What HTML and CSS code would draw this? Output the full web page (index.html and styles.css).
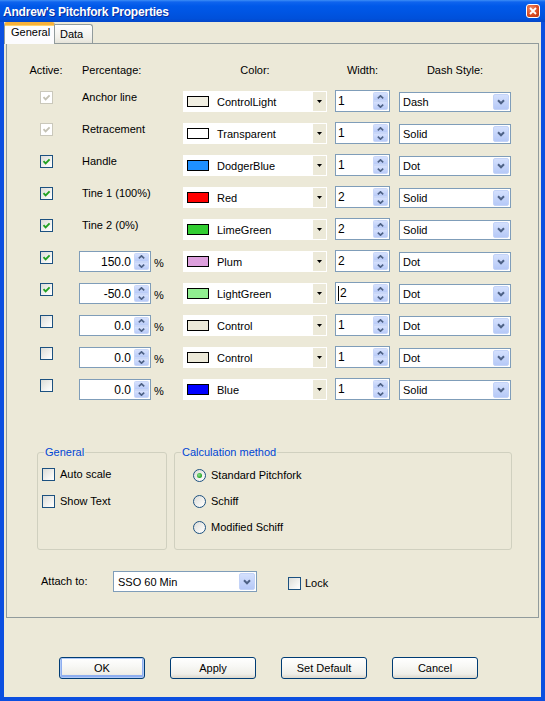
FILE: index.html
```html
<!DOCTYPE html>
<html>
<head>
<meta charset="utf-8">
<title>Andrew's Pitchfork Properties</title>
<link rel="stylesheet" href="styles.css">
</head>
<body>
<div class="window">
  <div class="titlebar">
    <span class="title">Andrew's Pitchfork Properties</span>
    <span class="close"><svg width="8" height="8" viewBox="0 0 8 8"><path d="M1 1L7 7M7 1L1 7" stroke="#fff" stroke-width="1.8" fill="none"/></svg></span>
  </div>
  <div class="frame">
    <div class="tabs">
      <div class="tab active">General</div>
      <div class="tab">Data</div>
    </div>
    <div class="panel">
      <div class="grid">
        <div class="h h-active">Active:</div>
        <div class="h h-pct">Percentage:</div>
        <div class="h h-color">Color:</div>
        <div class="h h-width">Width:</div>
        <div class="h h-dash">Dash Style:</div>

        <!-- row 1 -->
        <span class="cb dis"><svg width="9" height="9" viewBox="0 0 9 9"><path d="M1.5 4.2L3.6 6.3L7.6 2.3" stroke="#c4c2b4" stroke-width="1.9" fill="none"/></svg></span>
        <div class="lbl">Anchor line</div>
        <div class="ccombo"><span class="swatch sw-controllight"></span><span class="cc-text">ControlLight</span><span class="cc-btn"><svg width="5" height="3" viewBox="0 0 5 3"><path d="M0 0H5L2.5 3Z" fill="#000"/></svg></span></div>
        <div class="spin spin-w"><span class="spin-val">1</span><span class="spinbtn"><span class="sb"><svg width="7" height="4" viewBox="0 0 7 4"><path d="M0.8 3.4L3.5 0.8L6.2 3.4" stroke="#4d6185" stroke-width="1.6" fill="none"/></svg></span><span class="sb"><svg width="7" height="4" viewBox="0 0 7 4"><path d="M0.8 0.6L3.5 3.2L6.2 0.6" stroke="#4d6185" stroke-width="1.6" fill="none"/></svg></span></span></div>
        <div class="combo combo-dash"><span class="combo-text">Dash</span><span class="combo-btn"><svg width="8" height="6" viewBox="0 0 8 6"><path d="M1 1.3L4 4.3L7 1.3" stroke="#4d6185" stroke-width="2" fill="none"/></svg></span></div>

        <!-- row 2 -->
        <span class="cb dis"><svg width="9" height="9" viewBox="0 0 9 9"><path d="M1.5 4.2L3.6 6.3L7.6 2.3" stroke="#c4c2b4" stroke-width="1.9" fill="none"/></svg></span>
        <div class="lbl">Retracement</div>
        <div class="ccombo"><span class="swatch sw-transparent"></span><span class="cc-text">Transparent</span><span class="cc-btn"><svg width="5" height="3" viewBox="0 0 5 3"><path d="M0 0H5L2.5 3Z" fill="#000"/></svg></span></div>
        <div class="spin spin-w"><span class="spin-val">1</span><span class="spinbtn"><span class="sb"><svg width="7" height="4" viewBox="0 0 7 4"><path d="M0.8 3.4L3.5 0.8L6.2 3.4" stroke="#4d6185" stroke-width="1.6" fill="none"/></svg></span><span class="sb"><svg width="7" height="4" viewBox="0 0 7 4"><path d="M0.8 0.6L3.5 3.2L6.2 0.6" stroke="#4d6185" stroke-width="1.6" fill="none"/></svg></span></span></div>
        <div class="combo combo-dash"><span class="combo-text">Solid</span><span class="combo-btn"><svg width="8" height="6" viewBox="0 0 8 6"><path d="M1 1.3L4 4.3L7 1.3" stroke="#4d6185" stroke-width="2" fill="none"/></svg></span></div>

        <!-- row 3 -->
        <span class="cb"><svg width="9" height="9" viewBox="0 0 9 9"><path d="M1.5 4.2L3.6 6.3L7.6 2.3" stroke="#21a121" stroke-width="1.9" fill="none"/></svg></span>
        <div class="lbl">Handle</div>
        <div class="ccombo"><span class="swatch sw-dodgerblue"></span><span class="cc-text">DodgerBlue</span><span class="cc-btn"><svg width="5" height="3" viewBox="0 0 5 3"><path d="M0 0H5L2.5 3Z" fill="#000"/></svg></span></div>
        <div class="spin spin-w"><span class="spin-val">1</span><span class="spinbtn"><span class="sb"><svg width="7" height="4" viewBox="0 0 7 4"><path d="M0.8 3.4L3.5 0.8L6.2 3.4" stroke="#4d6185" stroke-width="1.6" fill="none"/></svg></span><span class="sb"><svg width="7" height="4" viewBox="0 0 7 4"><path d="M0.8 0.6L3.5 3.2L6.2 0.6" stroke="#4d6185" stroke-width="1.6" fill="none"/></svg></span></span></div>
        <div class="combo combo-dash"><span class="combo-text">Dot</span><span class="combo-btn"><svg width="8" height="6" viewBox="0 0 8 6"><path d="M1 1.3L4 4.3L7 1.3" stroke="#4d6185" stroke-width="2" fill="none"/></svg></span></div>

        <!-- row 4 -->
        <span class="cb"><svg width="9" height="9" viewBox="0 0 9 9"><path d="M1.5 4.2L3.6 6.3L7.6 2.3" stroke="#21a121" stroke-width="1.9" fill="none"/></svg></span>
        <div class="lbl">Tine 1 (100%)</div>
        <div class="ccombo"><span class="swatch sw-red"></span><span class="cc-text">Red</span><span class="cc-btn"><svg width="5" height="3" viewBox="0 0 5 3"><path d="M0 0H5L2.5 3Z" fill="#000"/></svg></span></div>
        <div class="spin spin-w"><span class="spin-val">2</span><span class="spinbtn"><span class="sb"><svg width="7" height="4" viewBox="0 0 7 4"><path d="M0.8 3.4L3.5 0.8L6.2 3.4" stroke="#4d6185" stroke-width="1.6" fill="none"/></svg></span><span class="sb"><svg width="7" height="4" viewBox="0 0 7 4"><path d="M0.8 0.6L3.5 3.2L6.2 0.6" stroke="#4d6185" stroke-width="1.6" fill="none"/></svg></span></span></div>
        <div class="combo combo-dash"><span class="combo-text">Solid</span><span class="combo-btn"><svg width="8" height="6" viewBox="0 0 8 6"><path d="M1 1.3L4 4.3L7 1.3" stroke="#4d6185" stroke-width="2" fill="none"/></svg></span></div>

        <!-- row 5 -->
        <span class="cb"><svg width="9" height="9" viewBox="0 0 9 9"><path d="M1.5 4.2L3.6 6.3L7.6 2.3" stroke="#21a121" stroke-width="1.9" fill="none"/></svg></span>
        <div class="lbl">Tine 2 (0%)</div>
        <div class="ccombo"><span class="swatch sw-limegreen"></span><span class="cc-text">LimeGreen</span><span class="cc-btn"><svg width="5" height="3" viewBox="0 0 5 3"><path d="M0 0H5L2.5 3Z" fill="#000"/></svg></span></div>
        <div class="spin spin-w"><span class="spin-val">2</span><span class="spinbtn"><span class="sb"><svg width="7" height="4" viewBox="0 0 7 4"><path d="M0.8 3.4L3.5 0.8L6.2 3.4" stroke="#4d6185" stroke-width="1.6" fill="none"/></svg></span><span class="sb"><svg width="7" height="4" viewBox="0 0 7 4"><path d="M0.8 0.6L3.5 3.2L6.2 0.6" stroke="#4d6185" stroke-width="1.6" fill="none"/></svg></span></span></div>
        <div class="combo combo-dash"><span class="combo-text">Solid</span><span class="combo-btn"><svg width="8" height="6" viewBox="0 0 8 6"><path d="M1 1.3L4 4.3L7 1.3" stroke="#4d6185" stroke-width="2" fill="none"/></svg></span></div>

        <!-- row 6 -->
        <span class="cb"><svg width="9" height="9" viewBox="0 0 9 9"><path d="M1.5 4.2L3.6 6.3L7.6 2.3" stroke="#21a121" stroke-width="1.9" fill="none"/></svg></span>
        <div class="pct"><div class="spin spin-p"><span class="spin-val">150.0</span><span class="spinbtn"><span class="sb"><svg width="7" height="4" viewBox="0 0 7 4"><path d="M0.8 3.4L3.5 0.8L6.2 3.4" stroke="#4d6185" stroke-width="1.6" fill="none"/></svg></span><span class="sb"><svg width="7" height="4" viewBox="0 0 7 4"><path d="M0.8 0.6L3.5 3.2L6.2 0.6" stroke="#4d6185" stroke-width="1.6" fill="none"/></svg></span></span></div><span class="pctsign">%</span></div>
        <div class="ccombo"><span class="swatch sw-plum"></span><span class="cc-text">Plum</span><span class="cc-btn"><svg width="5" height="3" viewBox="0 0 5 3"><path d="M0 0H5L2.5 3Z" fill="#000"/></svg></span></div>
        <div class="spin spin-w"><span class="spin-val">2</span><span class="spinbtn"><span class="sb"><svg width="7" height="4" viewBox="0 0 7 4"><path d="M0.8 3.4L3.5 0.8L6.2 3.4" stroke="#4d6185" stroke-width="1.6" fill="none"/></svg></span><span class="sb"><svg width="7" height="4" viewBox="0 0 7 4"><path d="M0.8 0.6L3.5 3.2L6.2 0.6" stroke="#4d6185" stroke-width="1.6" fill="none"/></svg></span></span></div>
        <div class="combo combo-dash"><span class="combo-text">Dot</span><span class="combo-btn"><svg width="8" height="6" viewBox="0 0 8 6"><path d="M1 1.3L4 4.3L7 1.3" stroke="#4d6185" stroke-width="2" fill="none"/></svg></span></div>

        <!-- row 7 -->
        <span class="cb"><svg width="9" height="9" viewBox="0 0 9 9"><path d="M1.5 4.2L3.6 6.3L7.6 2.3" stroke="#21a121" stroke-width="1.9" fill="none"/></svg></span>
        <div class="pct"><div class="spin spin-p"><span class="spin-val">-50.0</span><span class="spinbtn"><span class="sb"><svg width="7" height="4" viewBox="0 0 7 4"><path d="M0.8 3.4L3.5 0.8L6.2 3.4" stroke="#4d6185" stroke-width="1.6" fill="none"/></svg></span><span class="sb"><svg width="7" height="4" viewBox="0 0 7 4"><path d="M0.8 0.6L3.5 3.2L6.2 0.6" stroke="#4d6185" stroke-width="1.6" fill="none"/></svg></span></span></div><span class="pctsign">%</span></div>
        <div class="ccombo"><span class="swatch sw-lightgreen"></span><span class="cc-text">LightGreen</span><span class="cc-btn"><svg width="5" height="3" viewBox="0 0 5 3"><path d="M0 0H5L2.5 3Z" fill="#000"/></svg></span></div>
        <div class="spin spin-w"><span class="spin-val"><span class="caret"></span>2</span><span class="spinbtn"><span class="sb"><svg width="7" height="4" viewBox="0 0 7 4"><path d="M0.8 3.4L3.5 0.8L6.2 3.4" stroke="#4d6185" stroke-width="1.6" fill="none"/></svg></span><span class="sb"><svg width="7" height="4" viewBox="0 0 7 4"><path d="M0.8 0.6L3.5 3.2L6.2 0.6" stroke="#4d6185" stroke-width="1.6" fill="none"/></svg></span></span></div>
        <div class="combo combo-dash"><span class="combo-text">Dot</span><span class="combo-btn"><svg width="8" height="6" viewBox="0 0 8 6"><path d="M1 1.3L4 4.3L7 1.3" stroke="#4d6185" stroke-width="2" fill="none"/></svg></span></div>

        <!-- row 8 -->
        <span class="cb"></span>
        <div class="pct"><div class="spin spin-p"><span class="spin-val">0.0</span><span class="spinbtn"><span class="sb"><svg width="7" height="4" viewBox="0 0 7 4"><path d="M0.8 3.4L3.5 0.8L6.2 3.4" stroke="#4d6185" stroke-width="1.6" fill="none"/></svg></span><span class="sb"><svg width="7" height="4" viewBox="0 0 7 4"><path d="M0.8 0.6L3.5 3.2L6.2 0.6" stroke="#4d6185" stroke-width="1.6" fill="none"/></svg></span></span></div><span class="pctsign">%</span></div>
        <div class="ccombo"><span class="swatch sw-control"></span><span class="cc-text">Control</span><span class="cc-btn"><svg width="5" height="3" viewBox="0 0 5 3"><path d="M0 0H5L2.5 3Z" fill="#000"/></svg></span></div>
        <div class="spin spin-w"><span class="spin-val">1</span><span class="spinbtn"><span class="sb"><svg width="7" height="4" viewBox="0 0 7 4"><path d="M0.8 3.4L3.5 0.8L6.2 3.4" stroke="#4d6185" stroke-width="1.6" fill="none"/></svg></span><span class="sb"><svg width="7" height="4" viewBox="0 0 7 4"><path d="M0.8 0.6L3.5 3.2L6.2 0.6" stroke="#4d6185" stroke-width="1.6" fill="none"/></svg></span></span></div>
        <div class="combo combo-dash"><span class="combo-text">Dot</span><span class="combo-btn"><svg width="8" height="6" viewBox="0 0 8 6"><path d="M1 1.3L4 4.3L7 1.3" stroke="#4d6185" stroke-width="2" fill="none"/></svg></span></div>

        <!-- row 9 -->
        <span class="cb"></span>
        <div class="pct"><div class="spin spin-p"><span class="spin-val">0.0</span><span class="spinbtn"><span class="sb"><svg width="7" height="4" viewBox="0 0 7 4"><path d="M0.8 3.4L3.5 0.8L6.2 3.4" stroke="#4d6185" stroke-width="1.6" fill="none"/></svg></span><span class="sb"><svg width="7" height="4" viewBox="0 0 7 4"><path d="M0.8 0.6L3.5 3.2L6.2 0.6" stroke="#4d6185" stroke-width="1.6" fill="none"/></svg></span></span></div><span class="pctsign">%</span></div>
        <div class="ccombo"><span class="swatch sw-control"></span><span class="cc-text">Control</span><span class="cc-btn"><svg width="5" height="3" viewBox="0 0 5 3"><path d="M0 0H5L2.5 3Z" fill="#000"/></svg></span></div>
        <div class="spin spin-w"><span class="spin-val">1</span><span class="spinbtn"><span class="sb"><svg width="7" height="4" viewBox="0 0 7 4"><path d="M0.8 3.4L3.5 0.8L6.2 3.4" stroke="#4d6185" stroke-width="1.6" fill="none"/></svg></span><span class="sb"><svg width="7" height="4" viewBox="0 0 7 4"><path d="M0.8 0.6L3.5 3.2L6.2 0.6" stroke="#4d6185" stroke-width="1.6" fill="none"/></svg></span></span></div>
        <div class="combo combo-dash"><span class="combo-text">Dot</span><span class="combo-btn"><svg width="8" height="6" viewBox="0 0 8 6"><path d="M1 1.3L4 4.3L7 1.3" stroke="#4d6185" stroke-width="2" fill="none"/></svg></span></div>

        <!-- row 10 -->
        <span class="cb"></span>
        <div class="pct"><div class="spin spin-p"><span class="spin-val">0.0</span><span class="spinbtn"><span class="sb"><svg width="7" height="4" viewBox="0 0 7 4"><path d="M0.8 3.4L3.5 0.8L6.2 3.4" stroke="#4d6185" stroke-width="1.6" fill="none"/></svg></span><span class="sb"><svg width="7" height="4" viewBox="0 0 7 4"><path d="M0.8 0.6L3.5 3.2L6.2 0.6" stroke="#4d6185" stroke-width="1.6" fill="none"/></svg></span></span></div><span class="pctsign">%</span></div>
        <div class="ccombo"><span class="swatch sw-blue"></span><span class="cc-text">Blue</span><span class="cc-btn"><svg width="5" height="3" viewBox="0 0 5 3"><path d="M0 0H5L2.5 3Z" fill="#000"/></svg></span></div>
        <div class="spin spin-w"><span class="spin-val">1</span><span class="spinbtn"><span class="sb"><svg width="7" height="4" viewBox="0 0 7 4"><path d="M0.8 3.4L3.5 0.8L6.2 3.4" stroke="#4d6185" stroke-width="1.6" fill="none"/></svg></span><span class="sb"><svg width="7" height="4" viewBox="0 0 7 4"><path d="M0.8 0.6L3.5 3.2L6.2 0.6" stroke="#4d6185" stroke-width="1.6" fill="none"/></svg></span></span></div>
        <div class="combo combo-dash"><span class="combo-text">Solid</span><span class="combo-btn"><svg width="8" height="6" viewBox="0 0 8 6"><path d="M1 1.3L4 4.3L7 1.3" stroke="#4d6185" stroke-width="2" fill="none"/></svg></span></div>
      </div>

      <div class="groups">
        <fieldset class="grp grp-general">
          <legend>General</legend>
          <div class="opt opt-first"><span class="cb"></span><span>Auto scale</span></div>
          <div class="opt"><span class="cb"></span><span>Show Text</span></div>
        </fieldset>
        <fieldset class="grp grp-calc">
          <legend>Calculation method</legend>
          <div class="ropt ropt-first"><span class="rb on"><span class="dot"></span></span><span>Standard Pitchfork</span></div>
          <div class="ropt"><span class="rb"></span><span>Schiff</span></div>
          <div class="ropt"><span class="rb"></span><span>Modified Schiff</span></div>
        </fieldset>
      </div>

      <div class="attach">
        <span class="attach-lbl">Attach to:</span>
        <div class="combo combo-attach"><span class="combo-text">SSO 60 Min</span><span class="combo-btn"><svg width="8" height="6" viewBox="0 0 8 6"><path d="M1 1.3L4 4.3L7 1.3" stroke="#4d6185" stroke-width="2" fill="none"/></svg></span></div>
        <div class="lock"><span class="cb"></span><span>Lock</span></div>
      </div>
    </div>

    <div class="buttons">
      <div class="btn default">OK</div>
      <div class="btn">Apply</div>
      <div class="btn">Set Default</div>
      <div class="btn">Cancel</div>
    </div>
  </div>
</div>
</body>
</html>
```

FILE: styles.css
```css
* { box-sizing: border-box; }
html, body { margin: 0; padding: 0; }
body {
  width: 545px;
  height: 701px;
  overflow: hidden;
  font-family: "Liberation Sans", Arial, sans-serif;
  font-size: 11px;
  color: #000;
  background: #ece9d8;
}
.window {
  width: 545px;
  height: 701px;
  display: flex;
  flex-direction: column;
}
.titlebar {
  height: 22px;
  flex: none;
  display: flex;
  align-items: center;
  justify-content: space-between;
  padding: 0 5px 0 3px;
  background: linear-gradient(#3d8ef6 0, #0f64ee 2px, #0059e9 6px, #0055e3 55%, #0050da 85%, #0546c8 100%);
}
.title {
  color: #fff;
  font-weight: bold;
  font-size: 12px;
  letter-spacing: -0.2px;
  line-height: 14px;
  padding-top: 1px;
  text-shadow: 1px 1px 0 #0b2a9a;
}
.close {
  width: 14px;
  height: 14px;
  border: 1px solid #fff;
  border-radius: 3px;
  background: radial-gradient(circle at 35% 30%, #f08a66, #d8481f 60%, #b9330f);
  display: flex;
  align-items: center;
  justify-content: center;
}
.frame {
  flex: 1;
  border: 4px solid #0b4fe0;
  border-top: 0;
  background: #ece9d8;
  display: flex;
  flex-direction: column;
}
.tabs {
  height: 21px;
  flex: none;
  display: flex;
  align-items: flex-end;
  position: relative;
  z-index: 1;
}
.tab {
  line-height: 13px;
}
.tab.active {
  width: 51px;
  height: 22px;
  margin-bottom: -1px;
  background: #fcfcfe;
  border: 1px solid #919b9c;
  border-top: 3px solid #f7b13a;
  border-bottom: 0;
  border-radius: 3px 3px 0 0;
  padding-left: 6px;
  padding-top: 1px;
  box-shadow: inset 0 1px 0 #ffd16a;
}
.tab:not(.active) {
  width: 38px;
  height: 19px;
  background: linear-gradient(#fefefe, #f1f0ea 70%, #e6e4da);
  border: 1px solid #919b9c;
  border-left: 0;
  border-bottom: 0;
  border-radius: 0 3px 0 0;
  padding-left: 5px;
  padding-top: 3px;
}
.panel {
  flex: none;
  height: 575px;
  margin: 0 2px;
  border: 1px solid #919b9c;
  background: #ece9d8;
  padding-top: 20px;
}
.grid {
  margin-left: 19px;
  display: grid;
  grid-template-columns: 40px 117px 152px 64px 112px;
  grid-template-rows: 16px repeat(10, 21px);
  row-gap: 11px;
  align-items: start;
}
.h { line-height: 13px; }
.h-active { justify-self: center; }
.h-pct { padding-left: 16px; }
.h-color { width: 144px; text-align: center; }
.h-width { width: 55px; text-align: center; }
.h-dash { width: 112px; text-align: center; }

.cb {
  width: 13px;
  height: 13px;
  flex: none;
  border: 1px solid #1c5180;
  background: linear-gradient(135deg, #dcdcd7 0%, #f6f6f4 70%, #fff 100%);
  display: flex;
  align-items: center;
  justify-content: center;
}
.grid .cb { justify-self: center; }
.cb.dis {
  border-color: #cac8bb;
  background: #fff;
}
.lbl {
  padding-left: 16px;
  line-height: 13px;
}
.pct {
  margin-left: 13px;
  display: flex;
  align-items: center;
}
.pctsign {
  margin-left: 3px;
  padding-top: 3px;
}
.ccombo {
  width: 144px;
  height: 21px;
  background: #fff;
  display: flex;
  align-items: center;
}
.swatch {
  width: 22px;
  height: 11px;
  border: 1px solid #000;
  margin-left: 4px;
  margin-right: 8px;
  flex: none;
}
.sw-controllight { background: #f1efe2; }
.sw-transparent { background: #fff; }
.sw-dodgerblue { background: #1e90ff; }
.sw-red { background: #ff0000; }
.sw-limegreen { background: #32cd32; }
.sw-plum { background: #dda0dd; }
.sw-lightgreen { background: #90ee90; }
.sw-control { background: #ece9d8; }
.sw-blue { background: #0000ff; }
.cc-text { flex: 1; padding-top: 1px; }
.cc-btn {
  width: 13px;
  height: 19px;
  margin: 1px;
  background: #ece9d8;
  display: flex;
  align-items: center;
  justify-content: center;
}
.spin {
  display: flex;
  border: 1px solid #7f9db9;
  background: #fff;
}
.spin-w {
  width: 55px;
  height: 22px;
  margin-top: -1px;
}
.spin-p {
  width: 72px;
  height: 21px;
}
.spin-val {
  flex: 1;
  display: flex;
  align-items: center;
  padding-left: 2px;
  font-size: 12px;
}
.spin-p .spin-val {
  justify-content: flex-end;
  padding-left: 0;
  padding-right: 2px;
}
.caret {
  width: 1px;
  height: 15px;
  background: #000;
  margin-right: 1px;
}
.spinbtn {
  width: 15px;
  margin: 1px;
  display: flex;
  flex-direction: column;
  border-radius: 2px;
  overflow: hidden;
}
.sb {
  flex: 1;
  display: flex;
  align-items: center;
  justify-content: center;
  background: linear-gradient(#d6e1fd, #b9cbf8);
  border: 1px solid #c9d7f8;
}
.combo {
  display: flex;
  border: 1px solid #7f9db9;
  background: #fff;
  height: 20px;
}
.combo-dash {
  width: 112px;
  margin-top: 1px;
}
.combo-text {
  flex: 1;
  display: flex;
  align-items: center;
  padding-left: 3px;
}
.combo-btn {
  width: 16px;
  margin: 1px;
  border-radius: 2px;
  background: linear-gradient(#d4e0fd, #b6c9f7);
  border: 1px solid #c3d3f8;
  display: flex;
  align-items: center;
  justify-content: center;
}
.groups {
  margin-top: 46px;
  margin-left: 30px;
  display: flex;
  gap: 7px;
}
.grp {
  margin: 0;
  padding: 0;
  border: 1px solid #d0d0bf;
  border-radius: 3px;
  height: 104px;
  min-width: 0;
}
.grp legend {
  color: #0046d5;
  line-height: 13px;
  padding: 0 1px;
  margin-left: 6px;
}
.grp-general { width: 130px; }
.grp-calc { width: 338px; }
.opt, .ropt {
  display: flex;
  align-items: center;
  gap: 5px;
  line-height: 13px;
}
.opt { margin-left: 4px; }
.ropt { margin-left: 18px; }
.opt-first { margin-top: 9px; }
.opt + .opt { margin-top: 14px; }
.ropt-first { margin-top: 10px; }
.ropt + .ropt { margin-top: 13px; }
.rb {
  width: 13px;
  height: 13px;
  flex: none;
  border-radius: 50%;
  border: 1px solid #1c5180;
  background: linear-gradient(135deg, #dcdcd7 0%, #f6f6f4 70%, #fff 100%);
  display: flex;
  align-items: center;
  justify-content: center;
}
.dot {
  width: 5px;
  height: 5px;
  border-radius: 50%;
  background: radial-gradient(circle at 40% 40%, #8ee38e, #21a121 70%);
}
.attach {
  margin-top: 21px;
  margin-left: 34px;
  display: flex;
  align-items: flex-start;
}
.attach-lbl {
  width: 72px;
  line-height: 13px;
  margin-top: 4px;
}
.combo-attach {
  width: 144px;
  height: 21px;
}
.combo-attach .combo-text { padding-left: 4px; }
.lock {
  margin-left: 31px;
  margin-top: 6px;
  display: flex;
  align-items: center;
  gap: 4px;
  line-height: 13px;
}
.buttons {
  margin-top: 39px;
  padding-left: 55px;
  display: flex;
  gap: 25px;
}
.btn {
  width: 86px;
  height: 22px;
  border: 1px solid #003c74;
  border-radius: 3px;
  background: linear-gradient(#ffffff 0%, #f8f8f5 40%, #efeee8 80%, #dcd7cc 100%);
  display: flex;
  align-items: center;
  justify-content: center;
}
.btn.default {
  box-shadow: inset 0 0 0 1px #b0c9f6, inset 0 -1px 0 2px #8eaef0;
}
```
